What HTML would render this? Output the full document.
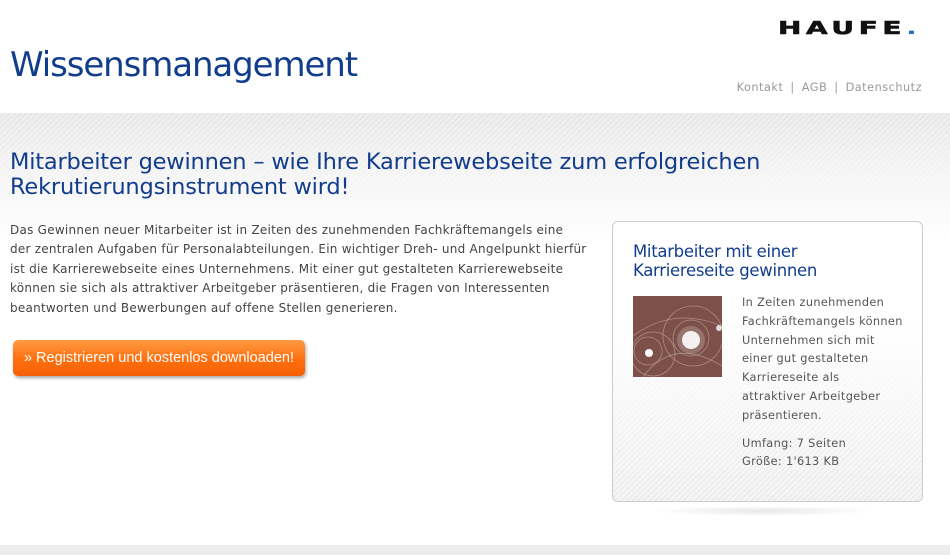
<!DOCTYPE html>
<html><head><meta charset="utf-8"><style>
*{margin:0;padding:0;box-sizing:border-box}
body{width:950px;height:555px;overflow:hidden;background:#fff;font-family:"DejaVu Sans",Verdana,sans-serif;position:relative}
.band{position:absolute;left:0;top:113px;width:950px;height:130px;
background:repeating-linear-gradient(135deg,rgba(255,255,255,.35) 0 2px,rgba(0,0,0,0) 2px 4px),linear-gradient(#e6e6e6,#f4f4f4 50%,#fff)}
.foot{position:absolute;left:0;top:545px;width:950px;height:10px;background:#ececec}
h1{position:absolute;left:10px;top:45px;font-family:"DejaVu Sans",sans-serif;font-weight:normal;font-size:34px;letter-spacing:-1.1px;color:#123d8c}
.logo{position:absolute;left:778px;top:18px;font-family:"DejaVu Sans",sans-serif;font-weight:bold;font-size:18px;letter-spacing:3px;color:#111;transform:scaleX(1.55);transform-origin:left;-webkit-text-stroke:.6px #111}
.logo span{color:#1b6fc8;-webkit-text-stroke:0}
.nav{position:absolute;right:28px;top:81px;font-size:11.3px;letter-spacing:.5px;color:#999}
.nav i{font-style:normal;margin:0 7px}
h2{position:absolute;left:10px;top:150px;width:800px;font-weight:normal;font-size:22.5px;line-height:25px;letter-spacing:-.2px;color:#123d8c}
.txt{position:absolute;left:10px;top:221px;width:600px;white-space:nowrap;font-size:12px;letter-spacing:.25px;line-height:19.4px;color:#444}
.btn{position:absolute;left:13px;top:340px;width:292px;height:36px;border-radius:5px;background:linear-gradient(#ff9a45,#ff6f0d 55%,#f46006);box-shadow:1px 2px 3px rgba(0,0,0,.35);color:#fff;font-family:"Liberation Sans",sans-serif;font-size:14.5px;line-height:36px;text-align:center}
.box{position:absolute;left:612px;top:221px;width:311px;height:281px;border:1px solid #ccc;border-radius:6px;
background:repeating-linear-gradient(135deg,rgba(255,255,255,.5) 0 2px,rgba(0,0,0,0) 2px 4px),linear-gradient(#fff,#fff 35%,#ececec)}
.shadow{position:absolute;left:650px;top:506px;width:225px;height:10px;border-radius:50%;background:radial-gradient(ellipse,#e6e6e6,rgba(255,255,255,0) 70%)}
.box h3{position:absolute;left:20px;top:20px;font-weight:normal;font-size:16.5px;line-height:19px;letter-spacing:-.3px;color:#123d8c}
.img{position:absolute;left:20px;top:74px;width:89px;height:81px;background:#7a4f48;overflow:hidden}
.bt{position:absolute;left:129px;top:72px;width:164px;font-size:11.3px;letter-spacing:.35px;line-height:18.8px;color:#555}
</style></head><body>
<div class="band"></div><div class="foot"></div>
<h1>Wissensmanagement</h1>
<div class="logo">HAUFE<span>.</span></div>
<div class="nav">Kontakt<i>|</i>AGB<i>|</i>Datenschutz</div>
<h2>Mitarbeiter gewinnen – wie Ihre Karrierewebseite zum erfolgreichen Rekrutierungsinstrument wird!</h2>
<div class="txt">Das Gewinnen neuer Mitarbeiter ist in Zeiten des zunehmenden Fachkräftemangels eine<br>der zentralen Aufgaben für Personalabteilungen. Ein wichtiger Dreh- und Angelpunkt hierfür<br>ist die Karrierewebseite eines Unternehmens. Mit einer gut gestalteten Karrierewebseite<br>können sie sich als attraktiver Arbeitgeber präsentieren, die Fragen von Interessenten<br>beantworten und Bewerbungen auf offene Stellen generieren.</div>
<div class="btn">» Registrieren und kostenlos downloaden!</div>
<div class="shadow"></div>
<div class="box">
<h3>Mitarbeiter mit einer<br>Karriereseite gewinnen</h3>
<div class="img"><svg width="89" height="81" viewBox="0 0 89 81"><rect width="89" height="81" fill="#7d514a"/><g fill="none" stroke="#d9c4bd" stroke-opacity=".5" stroke-width=".8"><circle cx="60" cy="40" r="30"/><circle cx="58" cy="42" r="18"/><circle cx="15" cy="55" r="14"/><circle cx="20" cy="58" r="22"/><path d="M0 40 Q40 10 89 30"/><path d="M10 81 Q40 40 89 70"/></g><circle cx="58" cy="44" r="9" fill="#fff" opacity=".9"/><circle cx="58" cy="44" r="14" fill="#fff" opacity=".2"/><circle cx="16" cy="57" r="4" fill="#fff"/><circle cx="86" cy="32" r="3" fill="#ddd"/></svg></div>
<div class="bt">In Zeiten zunehmenden Fachkräftemangels können Unternehmen sich mit einer gut gestalteten Karriereseite als attraktiver Arbeitgeber präsentieren.<div style="margin-top:9px">Umfang: 7 Seiten<br>Größe: 1'613 KB</div></div>
</div>
</body></html>
